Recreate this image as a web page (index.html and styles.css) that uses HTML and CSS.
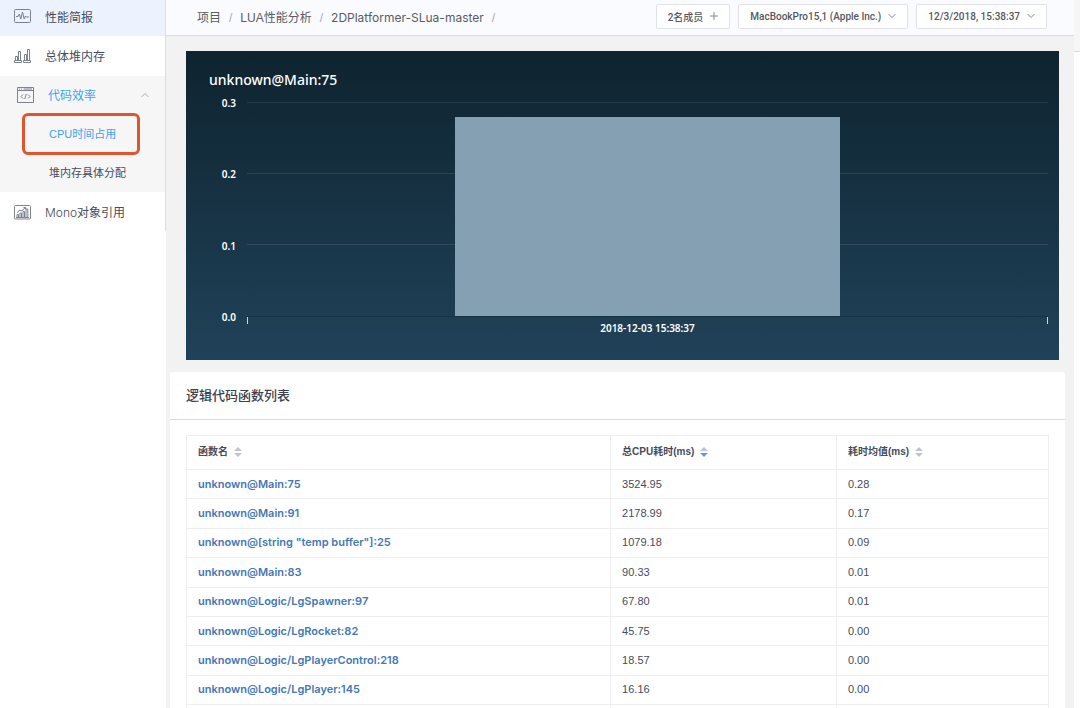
FILE: index.html
```html
<!DOCTYPE html>
<html lang="zh-CN">
<head>
<meta charset="utf-8">
<meta name="viewport" content="width=device-width, initial-scale=1">
<title>LUA性能分析</title>
<link rel="stylesheet" href="styles.css">
</head>
<body>
<div class="app">
  <nav class="sidebar" aria-label="主菜单">
    <div class="menu">
      <a class="item current" href="#report">
        <svg class="icon" viewBox="0 0 17 16"><rect x=".5" y="1.500" width="16" height="13" rx="1.200"/><path d="M2 8.500h2l1.300-2.500 1.500 5L8.500 4l1.700 7 1.300-3 1 1h2.500"/></svg>
        <span>性能简报</span>
      </a>
      <a class="item" href="#heap">
        <svg class="icon" viewBox="0 0 17 16"><path d="M.5 12.500h7v2h-7zM9.500 12.500h7v2h-7zM1.500 12.500V8.500h2v4M4.500 12.500v-9h2v9M10.500 12.500v-6h2v6M13.500 12.500v-11h2v11"/></svg>
        <span>总体堆内存</span>
      </a>
      <div class="group">
        <button class="item parent" type="button" aria-expanded="true">
          <svg class="icon tall" viewBox="0 0 17 18"><path d="M.5 1.500h16v15H.5zM.5 4.500h16M2 3h1M4 3h1M6.500 3h8.500M6 8.500l-2 2 2 2M11 8.500l2 2-2 2M9.200 8l-1.400 5"/></svg>
          <span>代码效率</span>
          <svg class="chevron" viewBox="0 0 8 6"><path d="M.5 5L4 1.500 7.500 5"/></svg>
        </button>
        <a class="sub marked" href="#cpu">CPU时间占用</a>
        <a class="sub" href="#alloc">堆内存具体分配</a>
      </div>
      <a class="item" href="#mono">
        <svg class="icon" viewBox="0 0 17 16"><rect x=".5" y="1.500" width="16" height="13.500" rx="1"/><path d="M3 13.500v-3h1.500v3M6 13.500V9h1.500v4.500M9 13.500V7.500h1.500v6M12 13.500V5h1.800v8.500M3 8.500l3-2.300 2 .8 3.300-3.500M9.500 3.500h2v1.800M2 13.500h13"/></svg>
        <span><span class="thin">Mono</span>对象引用</span>
      </a>
    </div>
  </nav>

  <div class="page">
    <header class="topbar">
      <nav class="crumbs" aria-label="路径">
        <a href="#projects">项目</a><i>/</i><a href="#lua">LUA性能分析</a><i>/</i><a class="name" href="#slua">2DPlatformer-SLua-master</a><i>/</i>
      </nav>
      <div class="actions">
        <button class="pill" type="button">2名成员<svg class="plus" viewBox="0 0 8 8"><path d="M4 0v8M0 4h8"/></svg></button>
        <button class="pill" type="button">MacBookPro15,1 (Apple Inc.)<svg class="caret" viewBox="0 0 8 6"><path d="M.5 1L4 4.500 7.500 1"/></svg></button>
        <button class="pill" type="button">12/3/2018, 15:38:37<svg class="caret" viewBox="0 0 8 6"><path d="M.5 1L4 4.500 7.500 1"/></svg></button>
      </div>
    </header>

    <main class="content">
      <section class="chart">
        <h2>unknown@Main:75</h2>
        <div class="graph">
          <div class="scale"><span>0.3</span><span>0.2</span><span>0.1</span><span>0.0</span></div>
          <div class="plot">
            <div class="band"></div><div class="band"></div><div class="band"></div>
            <div class="bar" style="left:26%;width:48%;height:93%"></div>
          </div>
          <div class="axis">2018-12-03 15:38:37</div>
        </div>
      </section>

      <section class="card">
        <h3>逻辑代码函数列表</h3>
        <div class="card-body">
          <table>
            <colgroup><col class="c-name"><col class="c-total"><col class="c-mean"></colgroup>
            <thead>
              <tr>
                <th scope="col">函数名<svg class="sort" viewBox="0 0 8 10"><path d="M4 0l4 4H0zM4 10L0 6h8z"/></svg></th>
                <th scope="col">总CPU耗时(ms)<svg class="sort" viewBox="0 0 8 10"><path d="M4 0l4 4H0z"/><path class="on" d="M4 10L0 6h8z"/></svg></th>
                <th scope="col">耗时均值(ms)<svg class="sort" viewBox="0 0 8 10"><path d="M4 0l4 4H0zM4 10L0 6h8z"/></svg></th>
              </tr>
            </thead>
            <tbody>
              <tr><td><a href="#f1">unknown@Main:75</a></td><td>3524.95</td><td>0.28</td></tr>
              <tr><td><a href="#f2">unknown@Main:91</a></td><td>2178.99</td><td>0.17</td></tr>
              <tr><td><a href="#f3">unknown@[string "temp buffer"]:25</a></td><td>1079.18</td><td>0.09</td></tr>
              <tr><td><a href="#f4">unknown@Main:83</a></td><td>90.33</td><td>0.01</td></tr>
              <tr><td><a href="#f5">unknown@Logic/LgSpawner:97</a></td><td>67.80</td><td>0.01</td></tr>
              <tr><td><a href="#f6">unknown@Logic/LgRocket:82</a></td><td>45.75</td><td>0.00</td></tr>
              <tr><td><a href="#f7">unknown@Logic/LgPlayerControl:218</a></td><td>18.57</td><td>0.00</td></tr>
              <tr><td><a href="#f8">unknown@Logic/LgPlayer:145</a></td><td>16.16</td><td>0.00</td></tr>
              <tr class="spare"><td></td><td></td><td></td></tr>
            </tbody>
          </table>
        </div>
      </section>
    </main>
  </div>
  <div class="gutter"></div>
</div>
</body>
</html>
```

FILE: styles.css
```css
* { box-sizing: border-box; }

body {
  margin: 0;
  height: 100vh;
  overflow: hidden;
  background: #fff;
  color: #454c5e;
  font-family: "Liberation Sans", "Noto Sans CJK SC", sans-serif;
  font-size: 12px;
}

a { color: inherit; text-decoration: none; }
button { font: inherit; color: inherit; cursor: pointer; }
svg { fill: none; stroke: currentColor; flex: none; }

.app {
  display: grid;
  grid-template-columns: 166px minmax(0, 1fr) 6px;
  height: 100%;
}

/* Sidebar */
.menu { border-right: 1px solid #dcdde1; }
.item {
  display: flex;
  align-items: center;
  gap: 14px;
  width: 100%;
  height: 39px;
  padding: 0 16px 0 14px;
  border: 0;
  background: none;
  text-align: left;
}
.item.current { height: 36px; padding-bottom: 4px; background: #ecf3fe; }
.icon { width: 17px; height: 16px; color: #7c8292; stroke-width: 1; }
.icon.tall { height: 18px; }
.thin { font-family: Inter, sans-serif; font-weight: 300; }
.group { background: #f6f6f6; margin-top: 1px; padding-bottom: 1px; }
.item.parent { height: 37px; padding-left: 17px; color: #459ff0; }
.chevron { width: 8px; height: 6px; margin-left: auto; color: #a6a9b0; }
.sub {
  display: flex;
  align-items: center;
  height: 36px;
  padding-left: 49px;
  padding-bottom: 2px;
  font-size: 11px;
}
.sub.marked {
  height: 42px;
  margin: 0 25px 0 22px;
  padding-left: 24px;
  border: 3px solid #e0552e;
  border-radius: 6px;
  color: #459ff0;
}

/* Top bar */
.page {
  display: flex;
  flex-direction: column;
  min-width: 0;
  min-height: 0;
  background: #f2f2f3;
}
.topbar {
  flex: none;
  display: flex;
  align-items: center;
  justify-content: space-between;
  height: 36px;
  padding: 0 27px 3px 31px;
  background: #fafbfe;
  border-bottom: 1px solid #dadce2;
}
.crumbs { display: flex; align-items: baseline; color: #5a5c62; }
.crumbs i { margin: 0 8px; color: #a9abb0; font-style: normal; }
.crumbs .name { font-family: Inter, sans-serif; }
.actions { display: flex; gap: 8px; }
.pill {
  display: flex;
  align-items: center;
  gap: 7px;
  height: 25px;
  padding: 0 11px;
  border: 1px solid #e1e3e8;
  border-radius: 2px;
  background: #fff;
  color: #55585f;
  font-family: Roboto, "Noto Sans CJK SC", sans-serif;
  font-size: 10px;
  font-weight: 500;
}
.plus { width: 8px; height: 8px; color: #85888f; }
.caret { width: 8px; height: 6px; color: #85888f; }

.content {
  flex: 1;
  display: flex;
  flex-direction: column;
  gap: 12px;
  min-height: 0;
  padding: 15px 9px 0 4px;
}

/* Chart */
.chart {
  flex: none;
  margin: 0 6px 0 16px;
  padding: 20px 11px 23px 23px;
  background: linear-gradient(#0e232f, #204259);
  color: #fff;
  font-family: "Noto Sans", sans-serif;
}
.chart h2 { margin: 0; font-size: 14px; font-weight: 500; line-height: 18px; }
.graph {
  display: grid;
  grid-template-columns: 27px minmax(0, 1fr);
  column-gap: 11px;
  margin-top: 13px;
  font-size: 10px;
  font-weight: 600;
}
.scale {
  display: flex;
  flex-direction: column;
  justify-content: space-between;
  height: 226px;
  margin: -5px 0 -6px;
  line-height: 12px;
  text-align: right;
}
.plot { position: relative; border-bottom: 1px solid #173244; }
.band { height: 71px; border-top: 1px solid rgba(255, 255, 255, .09); }
.bar { position: absolute; bottom: 0; background: #84a0b2; }
.axis {
  grid-column: 2;
  height: 20px;
  padding-top: 5px;
  line-height: 12px;
  text-align: center;
  background:
    linear-gradient(#c9d3da, #c9d3da) 0 0 / 1px 7px no-repeat,
    linear-gradient(#c9d3da, #c9d3da) 100% 0 / 1px 7px no-repeat;
}

/* Function list */
.card { flex: 1; min-height: 0; overflow: hidden; background: #fff; border-radius: 3px 3px 0 0; }
.card h3 {
  margin: 0;
  padding: 1px 16px 0;
  border-bottom: 1px solid #dadbdd;
  color: #3c4150;
  font-size: 13px;
  font-weight: 500;
  line-height: 46px;
}
.card-body { padding: 15px 16px 16px; }
table {
  width: 100%;
  height: 299px;
  table-layout: fixed;
  border-collapse: collapse;
}
.c-name { width: 49.2%; }
.c-total { width: 26.2%; }
th, td {
  padding: 0 11px;
  border: 1px solid #eceef1;
  text-align: left;
}
th { height: 34px; padding-bottom: 4px; font-size: 10px; font-weight: 700; }
td { padding-bottom: 1px; font-size: 11px; }
td a { color: #4478b6; font-family: Inter, sans-serif; font-weight: 600; }
.spare td { height: 29px; }
.sort {
  width: 8px;
  height: 10px;
  margin-left: 6px;
  vertical-align: -2px;
  fill: #c0c4cc;
  stroke: none;
}
.sort .on { fill: #5b9bea; }

/* Right edge strip */
.gutter { height: 52px; background: #f6f6f7; border-bottom: 1px solid #dcdcde; }
```
